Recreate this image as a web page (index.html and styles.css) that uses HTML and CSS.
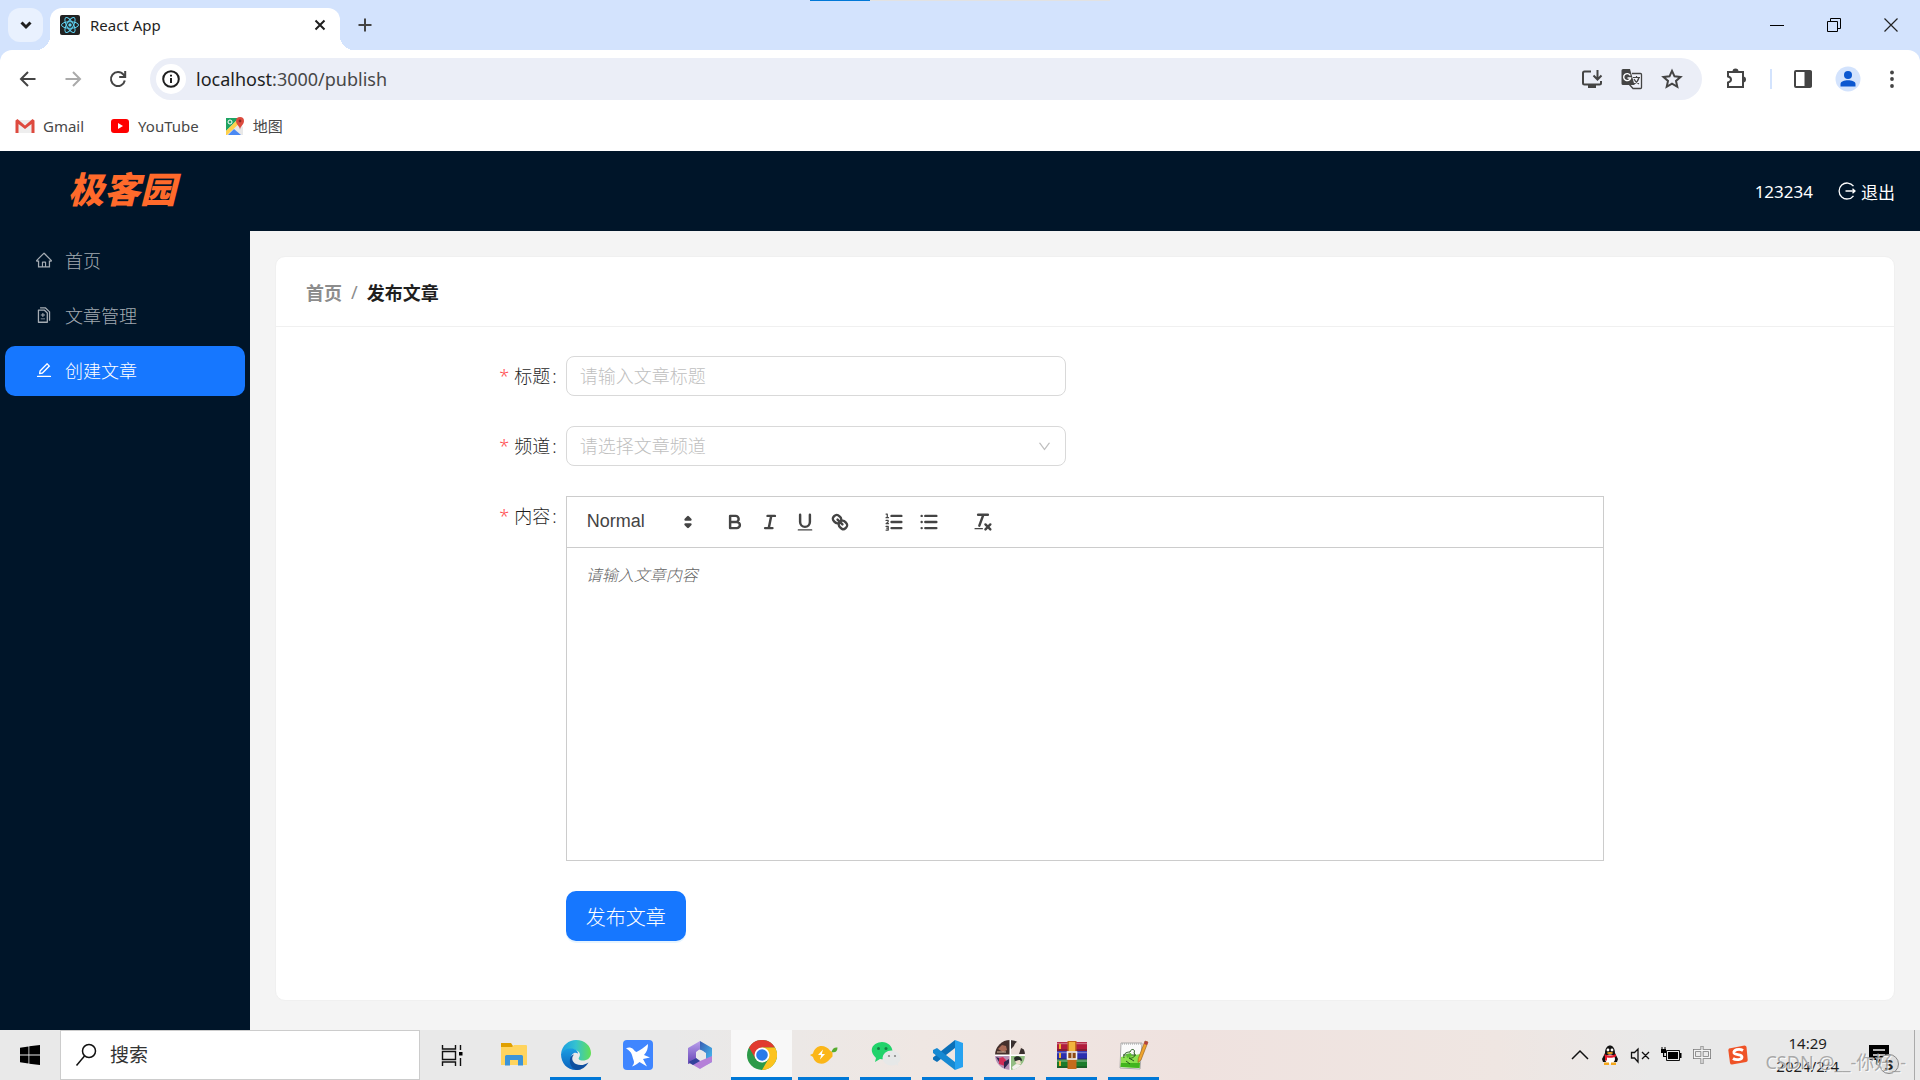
FILE: index.html
```html
<!DOCTYPE html>
<html lang="zh-CN">
<head>
<meta charset="utf-8">
<title>React App</title>
<link rel="stylesheet" href="styles.css">
</head>
<body>
<div class="desktop">

<header class="browser">
  <div class="tabstrip">
    <div class="snap-bar"><span class="snap-bar-fill"></span></div>
    <button class="tab-search" aria-label="Search tabs"><svg width="20" height="20" viewBox="0 0 20 20"><path class="ink thick" d="M5.500 7.500l4.500 4.500 4.500-4.500"/></svg></button>
    <div class="tab">
      <svg width="20" height="20" viewBox="0 0 20 20"><rect width="20" height="20" rx="2" fill="#222"/><g fill="none" stroke="#5fd3f3" stroke-width="1"><ellipse cx="10" cy="10" rx="8.500" ry="3.300"/><ellipse cx="10" cy="10" rx="8.500" ry="3.300" transform="rotate(60 10 10)"/><ellipse cx="10" cy="10" rx="8.500" ry="3.300" transform="rotate(120 10 10)"/></g><circle cx="10" cy="10" r="1.700" fill="#5fd3f3"/></svg>
      <span class="tab-title">React App</span>
      <button class="plain" aria-label="Close tab"><svg width="20" height="20" viewBox="0 0 20 20"><path class="ink" d="M5.500 5.500l9 9M14.500 5.500l-9 9"/></svg></button>
    </div>
    <button class="plain new-tab" aria-label="New tab"><svg width="20" height="20" viewBox="0 0 20 20"><path class="grey" d="M10 3.500v13M3.500 10h13"/></svg></button>
    <div class="window-buttons">
      <button class="plain" aria-label="Minimize"><svg width="14" height="14" viewBox="0 0 14 14"><path d="M0 7.500h14" stroke="#000"/></svg></button>
      <button class="plain" aria-label="Restore"><svg width="14" height="14" viewBox="0 0 14 14"><path d="M.5 3.500h10v10H.5zM3.500 3V.5h10v10H11" fill="none" stroke="#000"/></svg></button>
      <button class="plain" aria-label="Close"><svg width="14" height="14" viewBox="0 0 14 14"><path d="M.5.5l13 13M13.500.5l-13 13" fill="none" stroke="#222" stroke-width="1.200"/></svg></button>
    </div>
  </div>
  <div class="toolbar">
    <div class="nav-buttons">
      <button class="plain" aria-label="Back"><svg width="20" height="20" viewBox="0 0 20 20"><path class="grey" d="M17.500 10H3.500M10 3L3 10l7 7"/></svg></button>
      <button class="plain" aria-label="Forward"><svg width="20" height="20" viewBox="0 0 20 20"><path class="grey off" d="M2.500 10h14M10 3l7 7-7 7"/></svg></button>
      <button class="plain" aria-label="Reload"><svg width="20" height="20" viewBox="0 0 20 20"><path class="grey" d="M16.800 11.500A7 7 0 1 1 15.500 5.700L17 7.500M17.200 2v6h-6"/></svg></button>
    </div>
    <div class="omnibox">
      <button class="site-info" aria-label="Site information"><svg width="20" height="20" viewBox="0 0 20 20"><circle class="ink" cx="10" cy="10" r="7.800"/><path class="ink" d="M10 9v5M10 5.700v1.900"/></svg></button>
      <a class="url" href="#"><span class="host">localhost</span>:3000/publish</a>
      <button class="plain" aria-label="Install"><svg width="22" height="22" viewBox="0 0 22 22"><path class="grey" d="M10 3.500H3.500a1.500 1.500 0 0 0-1.500 1.500v10a1.500 1.500 0 0 0 1.500 1.500h15a1.500 1.500 0 0 0 1.500-1.500v-2M16.500 2v9M12.500 7.500l4 4 4-4"/><path d="M7 17h8v3H7z" fill="#444"/></svg></button>
      <button class="plain" aria-label="Translate"><svg width="22" height="22" viewBox="0 0 22 22"><path d="M11 5.500h8.500a1 1 0 0 1 1 1v13a1 1 0 0 1-1 1h-7.500L8 16" fill="#eff1f9" stroke="#444" stroke-width="1.300"/><path d="M2 1h7l4.500 16H2a1.500 1.500 0 0 1-1.500-1.500v-13A1.500 1.500 0 0 1 2 1z" fill="#444"/><path d="M9.300 7.500A3.500 3.500 0 1 0 9.600 10H6.500" fill="none" stroke="#fff" stroke-width="1.400"/><path d="M12 9.500h7M15.500 8v1.500M18 9.500c-.7 3-2.500 5-5 6.500M13 11c1 2.500 3 4 5 5" fill="none" stroke="#444" stroke-width="1.200"/></svg></button>
      <button class="plain" aria-label="Bookmark"><svg width="22" height="22" viewBox="0 0 22 22"><path class="grey" d="M11 2.800l2.500 5.500 6 .6-4.500 4 1.300 5.900L11 15.700l-5.300 3.100L7 12.900 2.500 8.900l6-.6z"/></svg></button>
    </div>
    <div class="actions">
      <button class="plain" aria-label="Extensions"><svg width="24" height="24" viewBox="0 0 24 24"><path class="grey" d="M4 5h15v15H4v-4.500c4-1 4-5 0-6z"/><path d="M8.500 4.500a3 3 0 0 1 6 0zM19 9.500a3 3 0 0 1 0 6z" fill="#444"/></svg></button>
      <span class="divider"></span>
      <button class="plain" aria-label="Side panel"><svg width="20" height="20" viewBox="0 0 20 20"><rect class="grey" x="2" y="2" width="16" height="16" rx="1"/><path d="M11.500 2h7v16h-7z" fill="#444"/></svg></button>
      <button class="plain" aria-label="Profile"><svg width="26" height="26" viewBox="0 0 26 26"><circle cx="13" cy="13" r="12.500" fill="#d3e3fd"/><circle cx="13" cy="9" r="4" fill="#0b57d0"/><path d="M5.500 20.500V18c0-5 15-5 15 0v2.500z" fill="#0b57d0"/></svg></button>
      <button class="plain" aria-label="Menu"><svg width="20" height="20" viewBox="0 0 20 20" fill="#444"><circle cx="10" cy="3.500" r="1.900"/><circle cx="10" cy="10" r="1.900"/><circle cx="10" cy="17" r="1.900"/></svg></button>
    </div>
  </div>
  <nav class="bookmarks">
    <a href="#"><svg width="20" height="20" viewBox="0 0 20 20"><path d="M2 4h16v13H2z" fill="#eee"/><path d="M.5 17V4.500L2.500 3 10 9.500 17.500 3l2 1.500V17h-3V8L10 13 3.500 8v9z" fill="#de4a3f"/></svg>Gmail</a>
    <a href="#"><svg width="20" height="20" viewBox="0 0 20 20"><rect x="1" y="3" width="18" height="14" rx="3" fill="#f00"/><path d="M8 7l5 3-5 3z" fill="#fff"/></svg>YouTube</a>
    <a href="#"><svg width="20" height="20" viewBox="0 0 20 20"><path d="M1 2h12v5l5 4v8H1z" fill="#e8e8e8"/><path d="M1 2h13L1 15z" fill="#1ea362"/><path d="M1 15L14 2l3 3L2 19H1z" fill="#ffd04b"/><path d="M3 19l6-6 7 6z" fill="#4a89f3"/><circle cx="5" cy="6" r="2" fill="none" stroke="#fff"/><path d="M15 14c0-4-4-5-4-9a4 4 0 0 1 8 0c0 4-4 5-4 9z" fill="#dc4b3e"/><circle cx="15" cy="5" r="1.400" fill="#8c2a22"/></svg>地图</a>
  </nav>
</header>

<div class="app">
  <header class="app-header">
    <div class="logo">极客园</div>
    <div class="user">
      <span>123234</span>
      <a class="logout" href="#"><svg width="18" height="18" viewBox="0 0 18 18"><path d="M15.500 4.200A8 8 0 1 0 15.500 13.800M7.500 9H17M14.500 6.700L17 9l-2.500 2.300" fill="none" stroke="currentColor" stroke-width="1.300"/></svg>退出</a>
    </div>
  </header>
  <div class="app-body">
    <nav class="sidebar">
      <a href="#"><svg class="icon" viewBox="0 0 1024 1024"><path d="M946.500 505L560.100 118.800l-25.900-25.900a31.500 31.500 0 00-44.400 0L77.500 505a63.900 63.900 0 00-18.800 46c.4 35.200 29.700 63.300 64.900 63.300h42.500V940h691.800V614.300h43.400c17.100 0 33.200-6.700 45.300-18.800a63.600 63.600 0 0018.700-45.300c0-17-6.700-33.100-18.800-45.200zM568 868H456V664h112v204zm217.900-325.700V868H632V640c0-22.100-17.900-40-40-40H432c-22.100 0-40 17.900-40 40v228H238.100V542.300h-96l370-369.700 23.100 23.100L882 542.300h-96.100z"/></svg>首页</a>
      <a href="#"><svg class="icon" viewBox="0 0 1024 1024"><path d="M476 399.100c0-3.900-3.100-7.100-7-7.100h-42c-3.800 0-7 3.200-7 7.100V484h-84.500c-4.100 0-7.500 3.100-7.500 7v42c0 3.800 3.400 7 7.500 7H420v84.900c0 3.900 3.200 7.100 7 7.100h42c3.900 0 7-3.200 7-7.100V540h84.500c4.100 0 7.500-3.200 7.500-7v-42c0-3.900-3.400-7-7.500-7H476v-84.900zM560.500 704h-225c-4.100 0-7.500 3.200-7.500 7v42c0 3.800 3.400 7 7.500 7h225c4.100 0 7.500-3.200 7.500-7v-42c0-3.800-3.400-7-7.500-7zm-7.100-502.600c-6-6-14.200-9.400-22.700-9.400H192c-17.700 0-32 14.300-32 32v704c0 17.700 14.300 32 32 32h512c17.700 0 32-14.300 32-32V397.300c0-8.500-3.400-16.600-9.400-22.600L553.400 201.400zM664 888H232V264h282.200L664 413.800V888zm190.200-581.400L611.300 72.900c-6-5.700-13.900-8.900-22.200-8.900H296c-4.400 0-8 3.600-8 8v56c0 4.400 3.600 8 8 8h277l219 210.600V824c0 4.400 3.600 8 8 8h56c4.400 0 8-3.600 8-8V329.600c0-8.700-3.500-17-9.800-23z"/></svg>文章管理</a>
      <a href="#" class="active" aria-current="page"><svg class="icon" viewBox="0 0 1024 1024"><path d="M257.700 752c2 0 4-.2 6-.5L431.900 722c2-.4 3.900-1.300 5.300-2.800l423.900-423.900a9.960 9.960 0 000-14.100L694.900 114.900c-1.900-1.900-4.400-2.900-7.100-2.900s-5.200 1-7.100 2.900L256.800 538.800c-1.500 1.500-2.400 3.300-2.800 5.300l-29.500 168.200a33.500 33.500 0 009.400 29.800c6.600 6.400 14.900 9.900 23.800 9.900zm67.400-174.400L687.800 215l73.300 73.300-362.700 362.600-88.900 15.700 15.600-89zM880 836H144c-17.700 0-32 14.300-32 32v36c0 4.400 3.600 8 8 8h784c4.400 0 8-3.600 8-8v-36c0-17.700-14.300-32-32-32z"/></svg>创建文章</a>
    </nav>
    <main class="content">
      <section class="card">
        <nav class="breadcrumb"><a href="#">首页</a><span class="slash">/</span><span class="current-page">发布文章</span></nav>
        <form class="form">
          <label class="label" for="title">标题</label>
          <input class="field" id="title" type="text" placeholder="请输入文章标题">

          <label class="label" for="channel">频道</label>
          <div class="field-select">
            <select class="field muted" id="channel"><option>请选择文章频道</option></select>
            <svg class="select-arrow" width="15" height="15" viewBox="0 0 1024 1024"><path d="M884 256h-75c-5.100 0-9.900 2.500-12.900 6.600L512 654.200 227.900 262.600c-3-4.100-7.800-6.600-12.900-6.600h-75c-6.500 0-10.300 7.400-6.500 12.700l352.600 486.100c12.800 17.600 39 17.600 51.700 0l352.600-486.100c3.900-5.300.1-12.700-6.400-12.700z"/></svg>
          </div>

          <label class="label" for="body">内容</label>
          <div class="editor">
            <div class="editor-toolbar">
              <div class="picker">
                <select aria-label="Text style"><option>Normal</option></select>
                <svg class="picker-arrow" width="22" height="22" viewBox="0 0 18 18"><path d="M7 11l2 2 2-2zM7 7l2-2 2 2z" fill="#444" stroke="#444" stroke-width="2" stroke-linejoin="round"/></svg>
              </div>
              <div class="tools">
                <button type="button" aria-label="Bold"><svg class="q" viewBox="0 0 18 18"><path d="M5 4h4.500a2.500 2.500 0 0 1 0 5H5zM5 9h5.500a2.500 2.500 0 0 1 0 5H5z"/></svg></button>
                <button type="button" aria-label="Italic"><svg class="q" viewBox="0 0 18 18"><path d="M7 4h6M5 14h6M8 14l2-10"/></svg></button>
                <button type="button" aria-label="Underline"><svg class="q" viewBox="0 0 18 18"><path d="M5 3v6a4 4 0 0 0 8 0V3"/><rect class="solid" x="3" y="15" width="12" height="1" rx=".5"/></svg></button>
                <button type="button" aria-label="Link"><svg class="q" viewBox="0 0 18 18"><path d="M7 7l4 4M8.900 4.577a3.476 3.476 0 0 1 .36 4.679A3.476 3.476 0 0 1 4.577 8.900C3.185 7.500 2.035 6.400 4.217 4.217S7.500 3.185 8.900 4.577ZM13.423 9.100a3.476 3.476 0 0 0-4.679-.36 3.476 3.476 0 0 0 .36 4.679c1.392 1.392 2.500 2.542 4.679.36S14.815 10.500 13.423 9.100Z"/></svg></button>
              </div>
              <div class="tools">
                <button type="button" aria-label="Ordered list"><svg class="q" viewBox="0 0 18 18"><path d="M7 4h8M7 9h8M7 14h8"/><path class="thin" d="M2.500 2.500h1v3M2.500 5.500h2M2.500 7.700h1.700v1.200L2.500 10.400h2M2.500 12.600h1.800v3H2.500M3 14h1.300"/></svg></button>
                <button type="button" aria-label="Bullet list"><svg class="q" viewBox="0 0 18 18"><path d="M6 4h9M6 9h9M6 14h9M3 4h0M3 9h0M3 14h0"/></svg></button>
              </div>
              <div class="tools">
                <button type="button" aria-label="Clear formatting"><svg class="q" viewBox="0 0 18 18"><path d="M5 3h8M6 12l3.350-9M11 11l4 4M15 11l-4 4"/><rect class="solid" x="2" y="14" width="7" height="1" rx=".5"/></svg></button>
              </div>
            </div>
            <textarea id="body" placeholder="请输入文章内容"></textarea>
          </div>

          <button type="button" class="submit">发布文章</button>
        </form>
      </section>
    </main>
  </div>
</div>

<footer class="taskbar">
  <button class="start plain" aria-label="Start"><svg width="20" height="20" viewBox="0 0 20 20"><path d="M0 2.700L8.500 1.500V9.500H0zM9.300 1.300L20 0v9.500H9.300zM0 10.500h8.500v8L0 17.300zM9.300 10.500H20V20L9.300 18.700z"/></svg></button>
  <label class="search"><svg width="22" height="26" viewBox="0 0 22 26"><circle cx="14" cy="9" r="6.500" fill="none" stroke="#111" stroke-width="1.500"/><path d="M9.500 14L1.500 23.500" stroke="#111" stroke-width="1.500"/></svg><input type="text" placeholder="搜索" aria-label="搜索"></label>
  <div class="tasks">
    <button aria-label="Task view"><svg width="30" height="30" viewBox="0 0 30 30"><path d="M5.500 5v4h13V5M5.500 11.500h13v8h-13zM5.500 26v-4h13v4M23.500 5v5M23.500 18v8" fill="none" stroke="#111" stroke-width="1.400"/><path d="M22 12h3.500v3.500H22z"/></svg></button>
    <button aria-label="Explorer"><svg width="30" height="30" viewBox="0 0 30 30"><path d="M2 3h10l2 3v4H2z" fill="#e0a000"/><path d="M2 7h11l2-2h12a1 1 0 0 1 1 1v19H2z" fill="#ffd45e"/><path d="M6 25.500V16.500a1.500 1.500 0 0 1 1.500-1.500h15a1.500 1.500 0 0 1 1.500 1.500v9h-5V20h-8v5.500z" fill="#3c94d8"/></svg></button>
    <button class="open" aria-label="Edge"><svg width="30" height="30" viewBox="0 0 30 30"><defs><linearGradient id="eg"><stop stop-color="#1b9de2"/><stop offset=".5" stop-color="#35c2d0"/><stop offset="1" stop-color="#62e053"/></linearGradient><linearGradient id="eb" x2="0" y2="1"><stop stop-color="#1b9de2"/><stop offset="1" stop-color="#0b62bd"/></linearGradient></defs><path d="M0 14C1 5 8 0 15 0c9 0 15 6 15 13 0 5-4 7.500-8 7.500-4 0-5-1.500-4-3 3-4-1-8-7-8-5 0-9 2-11 4.500z" fill="url(#eg)"/><path d="M0 14c2-4 6-6 10-5.500 4 0 7 2.500 7 5-4-2-7 1-7 5 0 6 5 10 10 10.500-1.500.7-3 1-5 1C6 30 0 23 0 14z" fill="url(#eb)"/><path d="M13 14.500c-3 3-2 7.500 2 9.500 4 2 9 1 12.500-1.500C25 27 20.500 30 16 30c-5-1-8-6-7-11 .5-2.500 2-4 4-4.500z" fill="#0f4f9f"/></svg></button>
    <button aria-label="Bird"><svg width="30" height="30" viewBox="0 0 30 30"><rect width="30" height="30" rx="4" fill="#4086ff"/><path d="M3 8.500C5 7 8 7 10 9c1.500 1.500 2 2.500 3.500 3C17 10.500 21 7.500 25 4c0 4-1 8-4 11l6 2.500-7 1.500 4 7.500-7.500-4.500c-2.500 2.500-5 3.500-7.500 4.500 2-2.500 2.500-4 1.500-6.500-1.500-4-1-8-7.500-11.500z" fill="#fff"/></svg></button>
    <button aria-label="Microsoft 365"><svg width="30" height="30" viewBox="0 0 30 30"><defs><linearGradient id="ma" x2="1" y2="1"><stop stop-color="#3858b0"/><stop offset="1" stop-color="#46c5f5"/></linearGradient><linearGradient id="mb" x2="0" y2="1"><stop stop-color="#b9a0ec"/><stop offset="1" stop-color="#6543b5"/></linearGradient></defs><path d="M15 1l12 7v14l-6 3V13l-7-4z" fill="url(#ma)"/><path d="M15 1v8l-4 3v9l-8 3V8z" fill="url(#mb)"/><path d="M3 22l8-4 4 3 12-5v6l-12 7z" fill="#b580d8"/><path d="M3 22l8-4 4 3-7 4z" fill="#33429b"/><circle cx="15.500" cy="14.500" r="4.300" fill="#e9e8e8"/></svg></button>
    <button class="open current" aria-label="Chrome"><svg width="30" height="30" viewBox="0 0 30 30"><circle cx="15" cy="15" r="15" fill="#2c9a48"/><path d="M2 7.500A15 15 0 0 1 28 7.500H15L8.500 18.700z" fill="#e13b2f"/><path d="M28 7.500A15 15 0 0 1 15 30l6.500-11.200L15 7.500z" fill="#fcc31e"/><circle cx="15" cy="15" r="7.500" fill="#fff"/><circle cx="15" cy="15" r="5.800" fill="#2b7bea"/></svg></button>
    <button class="open" aria-label="Lemon"><svg width="30" height="30" viewBox="0 0 30 30"><path d="M1 15l3-1.500C6 4.500 16 3.500 21 10.500l2.500 2v4L21 19C16 26 6 25 4 17z" fill="#fbb619"/><path d="M22.500 12c1-4 3.500-5 6-4.500 0 4-2 5.500-6 4.500z" fill="#55ab2f"/><path d="M14 9.500l-5 5.500h3.200l-1.200 4.500 5-5.500h-3.200z" fill="#fff"/></svg></button>
    <button class="open" aria-label="WeChat"><svg width="30" height="30" viewBox="0 0 30 30"><path d="M4 22l1-4C-5 8 5 2 11 2c7 0 12 6 10 12-2 5-7 6-12 5z" fill="#22d36b"/><ellipse cx="20.500" cy="18" rx="9" ry="7.500" fill="#e6e8e8"/><path d="M24 23l3 3v-5z" fill="#e6e8e8"/><g fill="#157f45"><circle cx="7.500" cy="8.500" r="1.500"/><circle cx="15" cy="8.500" r="1.500"/></g><g fill="#888"><circle cx="18" cy="16" r="1.100"/><circle cx="24" cy="16" r="1.100"/></g></svg></button>
    <button class="open" aria-label="VS Code"><svg width="30" height="30" viewBox="0 0 30 30"><path d="M22 0v8L4 22 0 19.500v-2z" fill="#0b70b8"/><path d="M22 30v-8L4 8 0 10v3z" fill="#1689d2"/><path d="M22 0l8 3v24l-8 3z" fill="#27a2f0"/></svg></button>
    <button class="open" aria-label="Photo"><svg width="30" height="30" viewBox="0 0 30 30"><defs><clipPath id="pc"><circle cx="15" cy="15" r="15"/></clipPath></defs><g clip-path="url(#pc)"><path d="M0 0h30v30H0z" fill="#fff"/><path d="M0 0h14.500v14.500H0z" fill="#45302c"/><path d="M3 9l4-4 4 1 1 4-4 2z" fill="#a86a56"/><path d="M2 12l9 0" stroke="#d9b8a2"/><path d="M16 0h14v14.500H16z" fill="#e9dcd6"/><path d="M16 0l9 1c-3 0-5 2-6 5l-3 3zM26 8l4 2v4h-6z" fill="#39302f"/><path d="M0 16h14.500v14H0z" fill="#b58fb4"/><path d="M4 18l4-1 3 3-1 6-6-2z" fill="#cf2c55"/><path d="M9 22l5-3v4l-5 6zM1 17l3 1v4z" fill="#30294e"/><path d="M16 16h14v14H16z" fill="#93bd82"/><path d="M19 18c2-3 8-2 8 3l-3-1-4 2z" fill="#252a26"/><path d="M20 21l5-1 1 4-4 1z" fill="#eddccb"/><path d="M17 27l4-3 5 1 1 5h-9z" fill="#f3f0ec"/></g></svg></button>
    <button class="open" aria-label="WinRAR"><svg width="30" height="30" viewBox="0 0 30 30"><path d="M0 2h30v9H0z" fill="#b01c3c"/><path d="M0 11h30v8.500H0z" fill="#2b2fae"/><path d="M0 19.500h30V28H0z" fill="#1b7c2b"/><path d="M0 3.500h30M0 12.500h30M0 21h30" stroke="#fff" stroke-opacity=".35" stroke-width="1.500"/><path d="M0 10h30M0 19h30M0 27h30" stroke="#222" stroke-opacity=".6"/><path d="M3 4v5M3 13v5M3 21v5" stroke="#f0b030" stroke-width="2"/><path d="M10.500 1h9v28h-9z" fill="#c46b1c"/><path d="M12 2h6v9h-6z" fill="#f1b53c"/><rect x="10.500" y="12" width="9" height="7" fill="#8d4a12" stroke="#f2f2f2" stroke-width="1.600"/><path d="M15 13v5" stroke="#fff"/></svg></button>
    <button class="open" aria-label="Notepad++"><svg width="30" height="30" viewBox="0 0 30 30"><path d="M2 3h21l-2 26-20-1z" fill="#fafafa" stroke="#999" stroke-width=".8"/><path d="M2 17c6-2 12-1 19.500-3l-1 14-19-1z" fill="#8be04e"/><path d="M2 23h19l-.5 5-19-1z" fill="#41b51e"/><path d="M3 4h19" stroke="#999" stroke-dasharray="1 1"/><path d="M5 18c-1-4 2-6 6-6 1-4 6-3 4 1 3 3-2 6-5 5l5 3M4 15h13M7 21l4 3" fill="none" stroke="#26591d"/><path d="M7 14l5-1 1 3-5 2z" fill="#5bbd32"/><path d="M26 1l3 1-7 18-3 2.500.3-4z" fill="#efa42d" stroke="#8e5a19" stroke-width=".6"/><path d="M26 1l3 1-1 3-3-1z" fill="#b44141"/></svg></button>
  </div>
  <div class="tray">
    <svg width="20" height="20" viewBox="0 0 20 20"><path d="M2 14l8-8 8 8" fill="none" stroke="#111" stroke-width="1.500"/></svg>
    <svg width="20" height="20" viewBox="0 0 20 20"><path d="M3 17l-1-3 3-6c0-10 10-10 10 0l3 6-1 3z" fill="#111"/><ellipse cx="10" cy="14" rx="5" ry="4.500" fill="#fff"/><path d="M4 9c4 2 8 2 12 0v2.500c-3 1.500-6 1.500-9 1v3H5v-4z" fill="#e2192b"/><circle cx="8" cy="5" r="1.400" fill="#fff"/><circle cx="12" cy="5" r="1.400" fill="#fff"/><ellipse cx="10" cy="8" rx="3" ry="1" fill="#f5a81c"/><path d="M4 17.500h5V20H4zM11 17.500h5V20h-5z" fill="#f5a81c"/></svg>
    <svg width="20" height="20" viewBox="0 0 20 20"><path d="M1.500 7.500h3L8 4v13l-3.500-4h-3zM12 7l7 7M19 7l-7 7" fill="none" stroke="#111" stroke-width="1.300"/></svg>
    <svg width="22" height="20" viewBox="0 0 22 20"><path d="M6.500 5.500h13v10h-13z" fill="none" stroke="#111"/><path d="M8 7h10v7H8zM20 8h1.500v5H20zM1 4h5v4H4.200v3H6v1H3V8H1zM1.500 2h1v2h-1zM4.500 2h1v2h-1z"/></svg>
    <svg width="20" height="20" viewBox="0 0 20 20"><path d="M2.500 5.500h15v7h-15zM10 1v18" fill="none" stroke="#777" stroke-width="3"/><path d="M2.500 5.500h15v7h-15zM10 1.500v17" fill="none" stroke="#f4f4f4" stroke-width="1.400"/></svg>
    <svg class="sogou" width="20" height="20" viewBox="0 0 20 20"><path d="M1 3.500L16.500.5a2 2 0 0 1 2 1.500l1.200 13a2 2 0 0 1-1.500 2L4 19.500a2 2 0 0 1-2-1.500L.3 5z" fill="#ef5327"/><path d="M15 5.500C11 3 5 5 6 8c1 2.500 8 .5 8 4 0 3-6 3.500-9 1.500" fill="none" stroke="#fff" stroke-width="2.800"/></svg>
    <div class="clock"><time>14:29</time><time>2024/2/4</time></div>
    <button class="notify plain" aria-label="Notifications"><svg width="20" height="20" viewBox="0 0 20 20"><path d="M0 0h20v15h-8l-5 5v-5H0z"/><path d="M4 5h12M4 10h12" stroke="#eee" stroke-width="1.500"/></svg><span class="badge">3</span></button>
    <span class="watermark">CSDN @__-你好_-</span>
  </div>
</footer>
</div>
</body>
</html>
```
FILE: styles.css
```css
* {
  box-sizing: border-box;
}

body {
  margin: 0;
  font-family: "Noto Sans", "Noto Sans CJK SC", sans-serif;
  font-size: 18px;
  color: #1f1f1f;
}

a {
  color: inherit;
  text-decoration: none;
}

button,
input,
select,
textarea {
  font: inherit;
  color: inherit;
  border: 0;
  padding: 0;
  margin: 0;
  border-radius: 0;
  background: none;
  outline: 0;
}

svg {
  display: block;
  flex: none;
}

.plain {
  display: flex;
}

.desktop {
  min-height: 100vh;
  display: flex;
  flex-direction: column;
}

/* Browser window */
.ink,
.grey {
  fill: none;
  stroke: #1f1f1f;
  stroke-width: 2;
}

.thick {
  stroke-width: 3;
}

.grey {
  stroke: #444;
}

.off {
  stroke: #aaa;
}

.browser {
  background: #d3e3fd;
}

.tabstrip {
  position: relative;
  display: flex;
  height: 50px;
  padding: 8px 8px 0;
}

.snap-bar {
  position: absolute;
  inset: 0 0 auto;
  width: 300px;
  height: 1px;
  margin: 0 auto;
  background: #e2e2e2;
}

.snap-bar-fill {
  display: block;
  width: 20%;
  height: 1px;
  background: #0078d7;
}

.tab-search {
  display: grid;
  place-items: center;
  width: 35px;
  height: 34px;
  border-radius: 12px;
  background: #e9f1fe;
}

.tab {
  position: relative;
  display: flex;
  align-items: center;
  width: 290px;
  margin-left: 7px;
  padding: 0 10px 8px;
  border-radius: 12px 12px 0 0;
  background: #fff;
}

.tab::before,
.tab::after {
  content: "";
  position: absolute;
  bottom: 0;
  width: 14px;
  height: 14px;
}

.tab::before {
  right: 100%;
  background: radial-gradient(circle at 0 0, transparent 14px, #fff 14px);
}

.tab::after {
  left: 100%;
  background: radial-gradient(circle at 100% 0, transparent 14px, #fff 14px);
}

.tab-title {
  flex: 1;
  padding-left: 10px;
  font-size: 15px;
  line-height: 20px;
}

.new-tab {
  margin: 7px 0 0 15px;
}

.window-buttons {
  display: flex;
  gap: 43px;
  margin: 10px 14px 0 auto;
}

.toolbar {
  display: flex;
  align-items: center;
  height: 58px;
  padding: 0 18px;
  border-radius: 12px 12px 0 0;
  background: #fff;
}

.nav-buttons {
  display: flex;
  gap: 25px;
  width: 132px;
}

.omnibox {
  flex: 1;
  display: flex;
  align-items: center;
  gap: 18px;
  height: 42px;
  padding: 0 19px 0 6px;
  border-radius: 21px;
  background: #ebeef7;
}

.site-info {
  display: grid;
  place-items: center;
  width: 30px;
  height: 30px;
  border-radius: 50%;
  background: #fff;
}

.url {
  flex: 1;
  margin-left: -8px;
  font-size: 18px;
  color: #474747;
}

.host {
  color: #1f1f1f;
}

.actions {
  display: flex;
  align-items: center;
  justify-content: space-between;
  width: 178px;
  margin-left: 22px;
}

.divider {
  width: 2px;
  height: 20px;
  background: #d3e3fd;
}

.bookmarks {
  display: flex;
  gap: 26px;
  height: 43px;
  padding: 0 15px 8px;
  background: #fff;
  font-size: 15px;
  color: #474747;
}

.bookmarks a {
  display: flex;
  align-items: center;
  gap: 8px;
}

/* Application */
.app {
  flex: 1;
  display: flex;
  flex-direction: column;
  background: #001529;
  font-weight: 300;
}

.app-header {
  display: flex;
  justify-content: space-between;
  align-items: center;
  height: 80px;
  padding: 0 25px 0 68px;
  color: #fff;
}

.logo {
  padding-bottom: 8px;
  font: italic 900 36px/50px "Noto Sans CJK SC", sans-serif;
  color: #ff6a2b;
}

.user {
  display: flex;
  align-items: center;
  gap: 25px;
  font-size: 17px;
  font-weight: 400;
}

.logout {
  display: flex;
  align-items: center;
  gap: 5px;
}

.app-body {
  flex: 1;
  display: flex;
}

.sidebar {
  flex: none;
  width: 250px;
  padding: 5px;
  display: flex;
  flex-direction: column;
  gap: 5px;
  color: rgba(255, 255, 255, 0.65);
}

.sidebar a {
  display: flex;
  align-items: center;
  gap: 12px;
  height: 50px;
  padding: 0 30px 2px;
  border-radius: 10px;
}

.sidebar .active {
  background: #1677ff;
  color: #fff;
}

.icon {
  width: 18px;
  height: 18px;
  fill: currentColor;
}

.content {
  flex: 1;
  padding: 25px 25px 29px;
  background: #f4f4f4;
}

.card {
  border: 1px solid #f0f0f0;
  border-radius: 10px;
  background: #fff;
}

.breadcrumb {
  display: flex;
  align-items: center;
  gap: 9px;
  height: 70px;
  padding: 0 30px;
  border-bottom: 1px solid #f0f0f0;
  font-weight: 700;
  color: #8c8c8c;
}

.slash {
  font-weight: 400;
}

.current-page {
  color: #1f1f1f;
}

.form {
  display: grid;
  grid-template-columns: 4fr 16fr 4fr;
  row-gap: 30px;
  padding: 29px 30px 59px;
}

.label {
  grid-column: 1;
  justify-self: end;
  padding-right: 9px;
  line-height: 40px;
}

.label::before {
  content: "*";
  margin-right: 5px;
  color: #ff4d4f;
}

.label::after {
  content: ":";
  margin-left: 2px;
}

.field,
.field-select,
.editor,
.submit {
  grid-column: 2;
}

.field,
.field-select {
  width: 100%;
  max-width: 500px;
  height: 40px;
}

.field {
  padding: 0 13px;
  border: 1px solid #d9d9d9;
  border-radius: 8px;
  background: #fff;
  appearance: none;
}

.field-select,
.picker {
  display: grid;
  align-items: center;
}

.field-select > *,
.picker > * {
  grid-area: 1 / 1;
}

.select-arrow {
  justify-self: end;
  margin-right: 14px;
  fill: #bfbfbf;
  pointer-events: none;
}

.field::placeholder,
.muted {
  color: #bfbfbf;
  opacity: 1;
}

.editor {
  border: 1px solid #ccc;
}

.editor-toolbar {
  display: flex;
  align-items: center;
  gap: 19px;
  height: 51px;
  padding: 0 10px;
  border-bottom: 1px solid #ccc;
}

.picker {
  width: 122px;
}

.picker select {
  width: 100%;
  height: 30px;
  padding: 0 10px 2px;
  font: 500 18px "Liberation Sans", sans-serif;
  color: #444;
  appearance: none;
}

.picker-arrow {
  justify-self: end;
  pointer-events: none;
}

.tools {
  display: flex;
}

.tools button {
  display: grid;
  place-items: center;
  width: 35px;
  height: 30px;
}

.q {
  width: 22px;
  height: 22px;
  fill: none;
  stroke: #444;
  stroke-width: 2;
  stroke-linecap: round;
  stroke-linejoin: round;
}

.q .thin {
  stroke-width: 1;
}

.q .solid {
  fill: #444;
  stroke: none;
}

.editor textarea {
  display: block;
  width: 100%;
  height: 312px;
  padding: 15px 19px;
  font-size: 16px;
  line-height: 24px;
  resize: none;
}

.editor textarea::placeholder {
  font-style: italic;
  color: #666;
  opacity: 1;
}

.submit {
  justify-self: start;
  height: 50px;
  padding: 0 20px;
  border-radius: 10px;
  background: #1677ff;
  box-shadow: 0 2px 0 rgba(5, 145, 255, 0.1);
  font-size: 20px;
  color: #fff;
}

/* Taskbar */
.taskbar {
  display: flex;
  height: 50px;
  background: linear-gradient(90deg, #e9e9e9 35%, #efe7e3 48%, #efe2df 62%, #efe6e2 78%, #e9e9e9 86%);
}

.start {
  width: 60px;
  align-items: center;
  justify-content: center;
}

.search {
  display: flex;
  align-items: center;
  gap: 13px;
  width: 360px;
  padding: 0 14px;
  border: 1px solid #ccc;
  background: #fff;
}

.search input {
  flex: 1;
  min-width: 0;
  font-size: 19px;
}

.search input::placeholder {
  color: #333;
  opacity: 1;
}

.tasks {
  display: flex;
  gap: 11px;
  margin-left: 6px;
}

.tasks button {
  display: grid;
  place-items: center;
  width: 51px;
  border-bottom: 3px solid transparent;
  padding-top: 3px;
}

.tasks .open {
  border-color: #0078d7;
}

.tasks .current {
  width: 61px;
  margin: 0 -5px;
  background: #f8f8f8;
}

.tray {
  position: relative;
  display: flex;
  align-items: center;
  gap: 10px;
  margin-left: auto;
  margin-right: 5px;
  border-right: 1px solid #aaa;
}

.sogou {
  margin-left: 6px;
}

.clock {
  display: flex;
  flex-direction: column;
  align-items: center;
  margin-left: 18px;
  font-size: 15px;
  line-height: 23px;
}

.notify {
  position: relative;
  margin: 0 25px 0 20px;
}

.badge {
  position: absolute;
  left: 10px;
  top: 9px;
  width: 20px;
  height: 20px;
  border: 1px solid #888;
  border-radius: 50%;
  background: #ddd;
  font-size: 15px;
  font-weight: 700;
  line-height: 18px;
  text-align: center;
}

.watermark {
  position: absolute;
  right: 8px;
  top: 18px;
  font-size: 18px;
  line-height: 28px;
  white-space: nowrap;
  color: rgba(150, 150, 150, 0.8);
  text-shadow: 1px 1px 0 rgba(255, 255, 255, 0.8);
}
```
